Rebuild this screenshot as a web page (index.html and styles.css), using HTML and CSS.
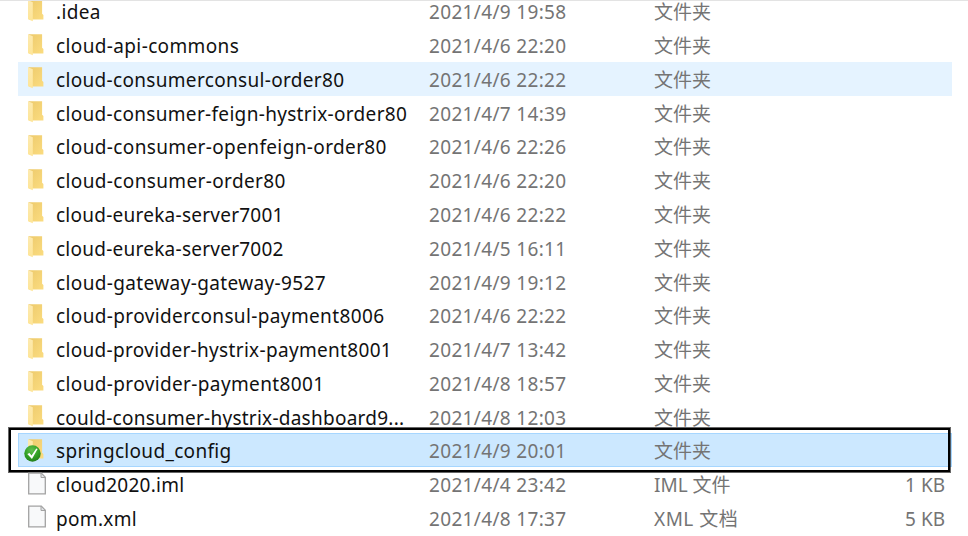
FILE: index.html
```
<!DOCTYPE html>
<html lang="zh-CN">
<head>
<meta charset="utf-8">
<title>cloud2020</title>
<link rel="stylesheet" href="styles.css">
</head>
<body>
<svg class="defs" aria-hidden="true">
  <defs>
    <linearGradient id="back" x1="0" y1="0" x2="1" y2="1"><stop offset="0" stop-color="#edca6c"/><stop offset="1" stop-color="#fbdc80"/></linearGradient>
    <linearGradient id="flap" x1="0" y1="0" x2="0" y2="1"><stop offset="0" stop-color="#fdeab0"/><stop offset="1" stop-color="#fee597"/></linearGradient>
    <radialGradient id="green" cx=".45" cy=".3" r=".75"><stop offset="0" stop-color="#62c04f"/><stop offset=".6" stop-color="#2f9e22"/><stop offset="1" stop-color="#237a1b"/></radialGradient>
    <symbol id="folder" viewBox="0 0 24 24">
      <path d="M4.5 1.2h13.6v13.5l1.3 1.3v4.6H5z" fill="url(#back)"/>
      <path d="M4 1.2l4.8 2v19L4 20.2z" fill="url(#flap)"/>
    </symbol>
    <symbol id="file" viewBox="0 0 24 24">
      <path d="M4.7 1.2h12.6l4 4v16.6H4.7z" fill="#f8f9fa" stroke="#a2a2a2" stroke-width="1.3"/>
      <path d="M17 1.2v4.3h4.3z" fill="#e3e5e8" stroke="#a2a2a2" stroke-width="1"/>
    </symbol>
    <symbol id="check" viewBox="0 0 18 18">
      <circle cx="9" cy="9" r="8.7" fill="url(#green)"/>
      <path d="M3.5 9.6l2.3-1.2 2.2 2.8 5-7.4 1.4.5-6 10.4z" fill="#fff"/>
    </symbol>
  </defs>
</svg>
<main class="list">
  <div class="row"><svg class="icon"><use href="#folder"/></svg><span class="name">.idea</span><span class="date">2021/4/9 19:58</span><span class="type">文件夹</span><span class="size"></span></div>
  <div class="row"><svg class="icon"><use href="#folder"/></svg><span class="name wide">cloud-api-commons</span><span class="date">2021/4/6 22:20</span><span class="type">文件夹</span><span class="size"></span></div>
  <div class="row hover"><svg class="icon"><use href="#folder"/></svg><span class="name">cloud-consumerconsul-order80</span><span class="date">2021/4/6 22:22</span><span class="type">文件夹</span><span class="size"></span></div>
  <div class="row"><svg class="icon"><use href="#folder"/></svg><span class="name">cloud-consumer-feign-hystrix-order80</span><span class="date">2021/4/7 14:39</span><span class="type">文件夹</span><span class="size"></span></div>
  <div class="row"><svg class="icon"><use href="#folder"/></svg><span class="name wide">cloud-consumer-openfeign-order80</span><span class="date">2021/4/6 22:26</span><span class="type">文件夹</span><span class="size"></span></div>
  <div class="row"><svg class="icon"><use href="#folder"/></svg><span class="name wide">cloud-consumer-order80</span><span class="date">2021/4/6 22:20</span><span class="type">文件夹</span><span class="size"></span></div>
  <div class="row"><svg class="icon"><use href="#folder"/></svg><span class="name tight">cloud-eureka-server7001</span><span class="date">2021/4/6 22:22</span><span class="type">文件夹</span><span class="size"></span></div>
  <div class="row"><svg class="icon"><use href="#folder"/></svg><span class="name tight">cloud-eureka-server7002</span><span class="date">2021/4/5 16:11</span><span class="type">文件夹</span><span class="size"></span></div>
  <div class="row"><svg class="icon"><use href="#folder"/></svg><span class="name wide">cloud-gateway-gateway-9527</span><span class="date">2021/4/9 19:12</span><span class="type">文件夹</span><span class="size"></span></div>
  <div class="row"><svg class="icon"><use href="#folder"/></svg><span class="name wide">cloud-providerconsul-payment8006</span><span class="date">2021/4/6 22:22</span><span class="type">文件夹</span><span class="size"></span></div>
  <div class="row"><svg class="icon"><use href="#folder"/></svg><span class="name">cloud-provider-hystrix-payment8001</span><span class="date">2021/4/7 13:42</span><span class="type">文件夹</span><span class="size"></span></div>
  <div class="row"><svg class="icon"><use href="#folder"/></svg><span class="name wide">cloud-provider-payment8001</span><span class="date">2021/4/8 18:57</span><span class="type">文件夹</span><span class="size"></span></div>
  <div class="row"><svg class="icon"><use href="#folder"/></svg><span class="name tight">could-consumer-hystrix-dashboard9...</span><span class="date">2021/4/8 12:03</span><span class="type">文件夹</span><span class="size"></span></div>
  <div class="row selected"><svg class="icon"><use href="#folder"/></svg><svg class="badge"><use href="#check"/></svg><span class="name">springcloud_config</span><span class="date">2021/4/9 20:01</span><span class="type">文件夹</span><span class="size"></span></div>
  <div class="row"><svg class="icon"><use href="#file"/></svg><span class="name tight">cloud2020.iml</span><span class="date">2021/4/4 23:42</span><span class="type">IML 文件</span><span class="size">1 KB</span></div>
  <div class="row"><svg class="icon"><use href="#file"/></svg><span class="name">pom.xml</span><span class="date">2021/4/8 17:37</span><span class="type xml">XML 文档</span><span class="size">5 KB</span></div>
</main>
</body>
</html>
```
FILE: styles.css
```
* { box-sizing: border-box; }
body {
  margin: 0;
  width: 968px;
  height: 536px;
  overflow: hidden;
  background: #fff;
  border-top: 1px solid #e3e3e3;
  font-family: "Noto Sans", "Noto Sans CJK SC", sans-serif;
  font-size: 19px;
  color: #747474;
}
.defs { position: absolute; width: 0; height: 0; }
.list { margin: -7px 16px 0 18px; }
.row {
  position: relative;
  display: grid;
  grid-template-columns: 38px 373px 225px 1fr 100px;
  align-items: center;
  height: 33.77px;
  line-height: 28px;
  white-space: nowrap;
}
.row > span { padding-top: 3px; }
.hover { background: #e5f3ff; box-shadow: 0 1px #e5f3ff; }
.selected { background: #cce8ff; box-shadow: inset 0 0 0 1px #a6d6ff; }
.selected::after {
  content: "";
  position: absolute;
  inset: -5px 2px -5px -9px;
  border: 2px solid #000;
  box-shadow: 0 0 0 1px rgba(0, 0, 0, .6);
}
.icon { width: 24px; height: 24px; margin-left: 6px; }
.badge { position: absolute; left: 6px; top: 12px; width: 17px; height: 17px; }
.name { color: #111; letter-spacing: .32px; }
.name.wide { letter-spacing: .37px; }
.name.tight { letter-spacing: .25px; }
.date { letter-spacing: .33px; }
.xml { letter-spacing: .5px; }
.size { text-align: right; padding-right: 7px; }
```
